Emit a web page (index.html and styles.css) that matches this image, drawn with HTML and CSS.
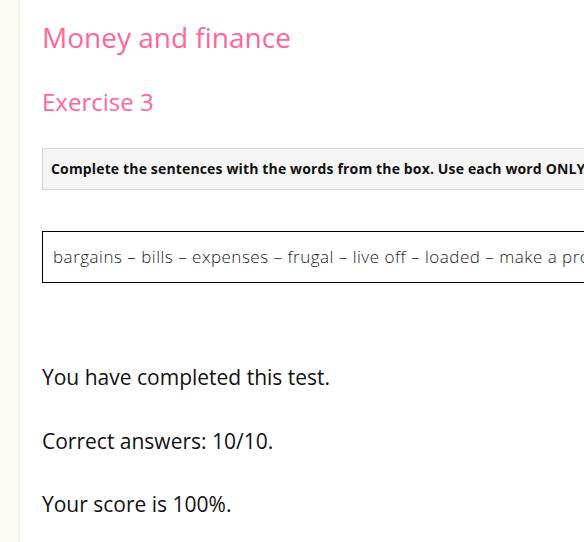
FILE: index.html
```html
<!DOCTYPE html>
<html>
<head>
<meta charset="utf-8">
<link rel="stylesheet" href="styles.css">
</head>
<body>
<div class="page">
  <aside class="sidebar"></aside>
  <main class="content">
    <h1 class="title">Money and finance</h1>
    <h2 class="subtitle">Exercise 3</h2>
    <div class="instructions">Complete the sentences with the words from the box. Use each word ONLY ONCE.</div>
    <div class="wordbox">bargains – bills – expenses – frugal – live off – loaded – make a profit – on a budget – save up – splash out</div>
    <div class="results">
      <p>You have completed this test.</p>
      <p>Correct answers: 10/10.</p>
      <p>Your score is 100%.</p>
    </div>
  </main>
</div>
</body>
</html>
```
FILE: styles.css
```css
html, body {
  margin: 0;
  padding: 0;
  overflow: hidden;
  background: #ffffff;
}
body {
  font-family: "Open Sans", "Lato", sans-serif;
  color: #111;
}
.page {
  display: flex;
  width: 1000px;
  min-height: 542px;
}
.sidebar {
  width: 18px;
  flex: none;
  background: #fbfaf4;
  border-right: 2px solid #f2f2ef;
}
.content {
  flex: 1;
  padding: 0 0 0 22px;
}
.title {
  margin: 20px 0 0;
  font-size: 28px;
  font-weight: 400;
  color: #ff6699;
  line-height: 34px;
}
.subtitle {
  margin: 33px 0 0;
  font-size: 24px;
  font-weight: 400;
  color: #ff6699;
  line-height: 30px;
}
.instructions {
  margin-top: 31px;
  background: #f5f5f5;
  border: 1px solid #d6d6d6;
  padding: 10px 8px;
  font-size: 14px;
  font-weight: 700;
  line-height: 20px;
  letter-spacing: 0.15px;
  white-space: nowrap;
}
.wordbox {
  margin-top: 41px;
  border: 1px solid #000;
  padding: 15px 10px;
  font-size: 17px;
  font-weight: 300;
  line-height: 20px;
  letter-spacing: 0.5px;
  color: #222;
  white-space: nowrap;
}
.results {
  margin-top: 82px;
}
.results p {
  margin: 0 0 39.5px;
  font-size: 21px;
  line-height: 24px;
}
```
